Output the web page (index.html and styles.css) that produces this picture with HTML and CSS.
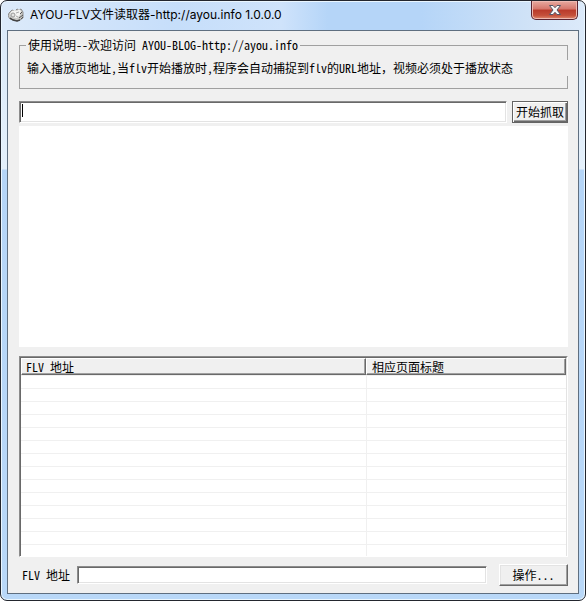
FILE: index.html
```
<!DOCTYPE html>
<html lang="zh-CN">
<head>
  <meta charset="UTF-8">
  <title>AYOU-FLV文件读取器</title>
  <link rel="stylesheet" href="styles.css">
</head>
<body>
  <div class="window">
    <header class="titlebar">
      <svg class="app-icon" viewBox="0 0 16 16" aria-hidden="true">
        <path d="M1 6l3-3 3 1 2-2 2 1 2-1 2 3v6l-3 2-3 1-3-1-4-1-2-3z" fill="#c9c9c6" stroke="#8e8e8e"/>
        <path d="M4 4l3-1 2 1 2-2 2 2-1 4-3 3-5-1-2-3z" fill="#f4f4f2"/>
        <path d="M2 11l3 2 4 1 3-1" stroke="#444" stroke-width="1.500" fill="none"/>
        <path d="M12 7l2-2M11 11l4-3M13 12l2-2" stroke="#555" fill="none"/>
        <circle cx="5" cy="8" r="2" fill="#e4e4e2" stroke="#999"/>
        <path d="M8 6l3-1M8 9l2 1" stroke="#aaa" fill="none"/>
      </svg>
      <h1>AYOU-FLV文件读取器-http://ayou.info 1.0.0.0</h1>
      <button class="close-btn" aria-label="关闭">
        <svg viewBox="0 0 14 12" aria-hidden="true">
          <path d="M1.500 1.500h3.500l2 2.200 2-2.200h3.500l-3.500 4.500 3.500 4.500h-3.500l-2-2.200-2 2.200h-3.500l3.500-4.500z" fill="#f8f8f8" stroke="#535666"/>
        </svg>
      </button>
    </header>

    <main class="client">
      <fieldset class="notice">
        <legend>使用说明--欢迎访问 AYOU-BLOG-http://ayou.info</legend>
        <p>输入播放页地址,当flv开始播放时,程序会自动捕捉到flv的URL地址<span class="full">，</span>视频必须处于播放状态</p>
      </fieldset>

      <form class="capture">
        <input type="text" class="url" aria-label="播放页地址">
        <button type="button" class="btn default">开始抓取</button>
      </form>

      <div class="browser"></div>

      <div class="list">
        <table>
          <thead>
            <tr><th class="col-url">FLV 地址</th><th>相应页面标题</th></tr>
          </thead>
          <tbody>
            <tr><td></td><td></td></tr>
            <tr><td></td><td></td></tr>
            <tr><td></td><td></td></tr>
            <tr><td></td><td></td></tr>
            <tr><td></td><td></td></tr>
            <tr><td></td><td></td></tr>
            <tr><td></td><td></td></tr>
            <tr><td></td><td></td></tr>
            <tr><td></td><td></td></tr>
            <tr><td></td><td></td></tr>
            <tr><td></td><td></td></tr>
            <tr><td></td><td></td></tr>
            <tr><td></td><td></td></tr>
            <tr><td></td><td></td></tr>
          </tbody>
        </table>
      </div>

      <form class="result">
        <label for="flvUrl">FLV 地址</label>
        <input type="text" id="flvUrl">
        <button type="button" class="btn">操作...</button>
      </form>
    </main>
  </div>
</body>
</html>
```
FILE: styles.css
```
* {
  box-sizing: border-box;
}
body {
  margin: 0;
  background: #fff;
  color: #000;
  font: 12px/16px "Noto Sans CJK SC", sans-serif;
  /* half-width latin, like SimSun */
  font-feature-settings: "hwid";
  font-variant-ligatures: none;
}
.window {
  display: flex;
  flex-direction: column;
  min-height: 100vh;
  padding: 0 6px 6px;
  border: 1px solid #23262e;
  border-radius: 7px;
  background: linear-gradient(#d9e8f8 0, #e4f0fb 168px, #b5d5f7 169px, #b9d8f8 100%);
  box-shadow: inset 0 0 0 1px #eaf6ff;
}
.titlebar {
  display: flex;
  align-items: flex-start;
  height: 28px;
  margin: 1px -5px 0;
  padding: 0 6px;
  border-radius: 6px 6px 0 0;
  background: linear-gradient(90deg, #dceafa 0, #c6defa 30%, #cfe3fb 48%, #b5d5f8 56%, #b5d5f8 72%, #cfe2f7 90%, #dceafa 100%);
}
.app-icon {
  width: 16px;
  height: 16px;
  margin-top: 5px;
}
h1 {
  flex: 1;
  margin: 4px 0 0 6px;
  font: 12px/18px Inter, "Noto Sans CJK SC", sans-serif;
  font-feature-settings: normal;
}
.close-btn {
  display: flex;
  align-items: center;
  justify-content: center;
  width: 47px;
  height: 19px;
  margin-top: -1px;
  padding: 0;
  border: 1px solid #5a2430;
  border-top: 0;
  border-radius: 0 0 5px 5px;
  background: linear-gradient(#e7aaa0 0, #d5766b 45%, #b93a2a 50%, #c4503b 80%, #df8a6e 100%);
  box-shadow: inset 0 0 0 1px #eebab2;
}
.close-btn svg {
  width: 14px;
  height: 12px;
}
.client {
  display: flex;
  flex: 1;
  flex-direction: column;
  padding: 6px 10px 7px 11px;
  border: 1px solid #5f6f80;
  background: #f0f0f0;
}
.notice {
  min-width: 0;
  height: 52px;
  margin: 0 0 12px;
  padding: 0 0 0 6px;
  border: 1px solid #a0a0a0;
}
.notice legend {
  padding: 0 2px;
}
.notice p {
  margin: 7px -1px 0 0;
  padding-left: 1px;
  background: #f0f0f0;
  white-space: nowrap;
}
.full {
  font-feature-settings: normal;
}
input {
  flex: 1;
  min-width: 0;
  padding: 0 2px;
  border: 1px solid;
  border-color: #8c8c8c #fff #fff #8c8c8c;
  border-radius: 0;
  outline: 0;
  background: #fff;
  box-shadow: inset 1px 1px #696969, inset -1px -1px #e3e3e3;
  font: inherit;
}
.btn {
  padding: 0;
  border: 1px solid;
  border-color: #fff #696969 #696969 #fff;
  border-radius: 0;
  background: #f0f0f0;
  box-shadow: inset -1px -1px #a0a0a0, inset 1px 1px #e3e3e3;
  color: #000;
  font: inherit;
  font-feature-settings: inherit;
}
.capture {
  display: flex;
  gap: 5px;
  height: 22px;
  margin-bottom: 3px;
}
.url {
  /* text caret */
  background: linear-gradient(#000, #000) 2px 2px / 1px 13px no-repeat #fff;
}
.btn.default {
  width: 56px;
  border-color: #646464;
  box-shadow: inset 1px 1px #fff, inset -1px -1px #696969, inset -2px -2px #a0a0a0;
}
.browser {
  height: 221px;
  margin-bottom: 9px;
  background: #fff;
}
.list {
  flex: 1 0 200px;
  height: 200px;
  overflow: hidden;
  border: 1px solid;
  border-color: #8c8c8c #fff #fff #8c8c8c;
  background: #fff;
}
table {
  width: 100%;
  border: 1px solid;
  border-color: #696969 #e3e3e3 #e3e3e3 #696969;
  border-spacing: 0;
  table-layout: fixed;
}
th {
  height: 17px;
  padding: 0 5px;
  border: 1px solid;
  border-color: #fff #696969 #696969 #fff;
  background: #f0f0f0;
  box-shadow: inset -1px -1px #a0a0a0;
  font-weight: normal;
  line-height: 15px;
  text-align: left;
}
th:first-child {
  padding-left: 4px;
}
.col-url {
  width: 345px;
}
td {
  height: 13px;
  padding: 0;
  border-top: 1px solid #f0f0f0;
}
td + td {
  border-left: 1px solid #f0f0f0;
}
.result {
  display: flex;
  align-items: center;
  gap: 7px;
  height: 22px;
  margin-top: 7px;
  padding-left: 3px;
}
.result input {
  height: 18px;
}
.result .btn {
  width: 69px;
  height: 22px;
  margin-left: 5px;
}
```
